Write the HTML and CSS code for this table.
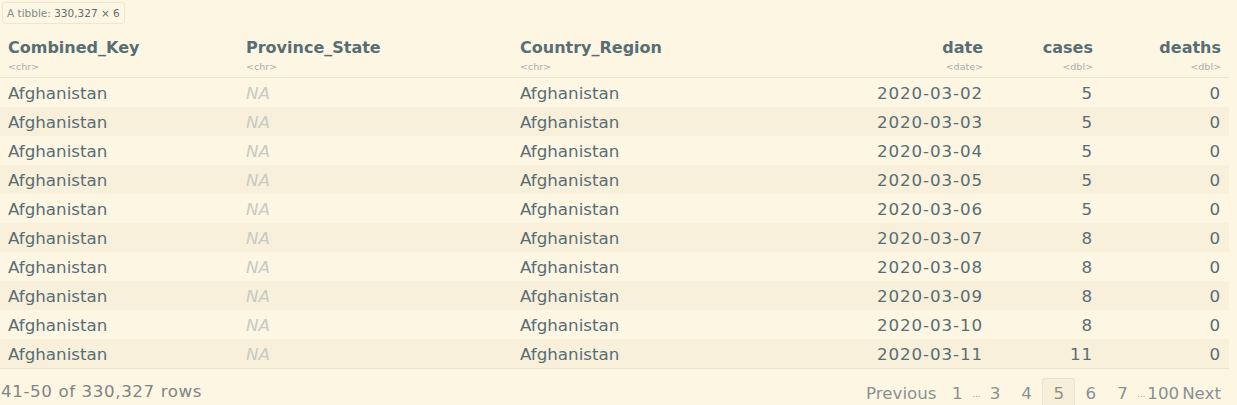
FILE: index.html
```html
<!DOCTYPE html>
<html>
<head>
<meta charset="utf-8">
<link rel="stylesheet" href="styles.css">
</head>
<body>
<div class="page">
  <div class="tibble"><span class="lbl">A tibble:</span> <span class="dim">330,327 × 6</span></div>
  <table class="grid">
    <colgroup>
      <col class="c1"><col class="c2"><col class="c3"><col class="c4"><col class="c5"><col class="c6">
    </colgroup>
    <thead>
      <tr>
        <th class="l"><div class="nm">Combined_Key</div><div class="ty">&lt;chr&gt;</div></th>
        <th class="l"><div class="nm">Province_State</div><div class="ty">&lt;chr&gt;</div></th>
        <th class="l"><div class="nm">Country_Region</div><div class="ty">&lt;chr&gt;</div></th>
        <th class="r"><div class="nm">date</div><div class="ty">&lt;date&gt;</div></th>
        <th class="r"><div class="nm">cases</div><div class="ty">&lt;dbl&gt;</div></th>
        <th class="r"><div class="nm">deaths</div><div class="ty">&lt;dbl&gt;</div></th>
      </tr>
    </thead>
    <tbody>
      <tr><td>Afghanistan</td><td class="na">NA</td><td>Afghanistan</td><td class="r num">2020-03-02</td><td class="r num">5</td><td class="r num">0</td></tr>
      <tr><td>Afghanistan</td><td class="na">NA</td><td>Afghanistan</td><td class="r num">2020-03-03</td><td class="r num">5</td><td class="r num">0</td></tr>
      <tr><td>Afghanistan</td><td class="na">NA</td><td>Afghanistan</td><td class="r num">2020-03-04</td><td class="r num">5</td><td class="r num">0</td></tr>
      <tr><td>Afghanistan</td><td class="na">NA</td><td>Afghanistan</td><td class="r num">2020-03-05</td><td class="r num">5</td><td class="r num">0</td></tr>
      <tr><td>Afghanistan</td><td class="na">NA</td><td>Afghanistan</td><td class="r num">2020-03-06</td><td class="r num">5</td><td class="r num">0</td></tr>
      <tr><td>Afghanistan</td><td class="na">NA</td><td>Afghanistan</td><td class="r num">2020-03-07</td><td class="r num">8</td><td class="r num">0</td></tr>
      <tr><td>Afghanistan</td><td class="na">NA</td><td>Afghanistan</td><td class="r num">2020-03-08</td><td class="r num">8</td><td class="r num">0</td></tr>
      <tr><td>Afghanistan</td><td class="na">NA</td><td>Afghanistan</td><td class="r num">2020-03-09</td><td class="r num">8</td><td class="r num">0</td></tr>
      <tr><td>Afghanistan</td><td class="na">NA</td><td>Afghanistan</td><td class="r num">2020-03-10</td><td class="r num">8</td><td class="r num">0</td></tr>
      <tr><td>Afghanistan</td><td class="na">NA</td><td>Afghanistan</td><td class="r num">2020-03-11</td><td class="r num">11</td><td class="r num">0</td></tr>
    </tbody>
  </table>
  <div class="footer">
    <div class="info">41-50 of 330,327 rows</div>
    <div class="pager">
      <span class="pbtn prev">Previous</span>
      <span class="pbtn">1</span>
      <span class="ell">…</span>
      <span class="pbtn">3</span>
      <span class="pbtn">4</span>
      <span class="pbtn cur">5</span>
      <span class="pbtn">6</span>
      <span class="pbtn">7</span>
      <span class="ell">…</span>
      <span class="pbtn big">100</span>
      <span class="pbtn next">Next</span>
    </div>
  </div>
</div>
</body>
</html>
```

FILE: styles.css
```css
html, body {
  margin: 0;
  padding: 0;
  background: #fdf6e3;
}
body {
  font-family: "DejaVu Sans", Verdana, sans-serif;
  color: #586e75;
}
.page {
  width: 1229px;
}
.tibble {
  display: inline-block;
  margin: 2px 0 0 2px;
  padding: 0 4px;
  height: 20px;
  line-height: 20px;
  border: 1px solid #ece6d2;
  border-radius: 3px;
  font-size: 10.5px;
}
.tibble .lbl { color: #7f8c8d; }
.tibble .dim { color: #5f6f74; }
.grid {
  margin-top: 9px;
  width: 1229px;
  border-collapse: collapse;
  table-layout: fixed;
  font-size: 16.7px;
}
.c1 { width: 238px; }
.c2 { width: 274px; }
.c3 { width: 259px; }
.c4 { width: 220px; }
.c5 { width: 110px; }
.c6 { width: 128px; }
th {
  font-weight: bold;
  text-align: left;
  padding: 4px 8px 2px 8px;
  vertical-align: top;
  border-bottom: 1px solid #ebe4d0;
}
th.r { text-align: right; }
.nm {
  font-size: 16px;
  line-height: 22px;
  color: #586e75;
}
.ty {
  font-weight: normal;
  font-size: 9.5px;
  line-height: 16px;
  color: #a5adad;
}
td {
  padding: 2px 8px 0 8px;
  height: 27px;
  line-height: 27px;
  white-space: nowrap;
}
td.r { text-align: right; }
td.num { letter-spacing: 0.9px; }
td.na { color: #c7cbc4; font-style: italic; }
tbody tr:nth-child(even) td { background: #f8f0db; }
tbody tr:last-child td { border-bottom: 1px solid #ebe4d0; }
.footer {
  display: flex;
  justify-content: space-between;
  align-items: flex-end;
  height: 36px;
  font-size: 16.7px;
}
.info {
  padding-left: 1px;
  color: #7d8587;
  line-height: 26px;
  margin-bottom: 1px;
  letter-spacing: 0.6px;
}
.pager {
  display: flex;
  align-items: flex-end;
  color: #8a9192;
  padding-right: 7px;
}
.pbtn {
  display: inline-block;
  height: 26px;
  line-height: 29px;
  padding: 0 9.5px;
  border: 1px solid transparent;
  border-bottom: none;
  border-radius: 3px 3px 0 0;
}
.pbtn.prev { padding: 0 4px 0 0; }
.pbtn.cur { background: #f7efda; border-color: #e9e3d0; color: #8a9192; padding: 0 10px; }
.pbtn.big { padding: 0 0 0 2px; }
.pbtn.next { padding: 0 0 0 1px; }
.ell {
  font-size: 8px;
  line-height: 20px;
  color: #8a9192;
  margin: 0 -1px;
}
```
